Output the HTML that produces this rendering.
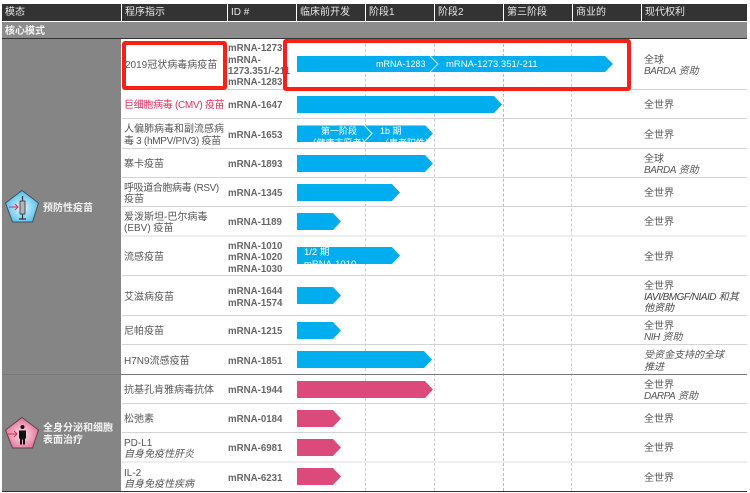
<!DOCTYPE html>
<html lang="zh"><head><meta charset="utf-8"><style>
html,body{margin:0;padding:0;background:#fff}
body{width:750px;height:493px;position:relative;overflow:hidden;font:10px/11.3px "Liberation Sans","Noto Sans CJK SC",sans-serif;color:#555}
#w{position:absolute;left:0;top:0;width:750px;height:493px;filter:blur(.3px)}
.h{position:absolute;top:4px;height:17px;background:#333;color:#e8e8e8;line-height:18.500px;padding-left:3px;box-sizing:border-box;white-space:nowrap}
.d{position:absolute;top:39px;height:452px;width:0;border-left:1px dashed #ccc}
.l{position:absolute;left:122px;width:625px;height:1px;background:#d4d4d4}
.r{position:absolute;left:0;width:750px;transform:translateY(2px)}
.r>div{position:absolute;top:0;bottom:0;display:flex;align-items:center}
.a{left:124px;width:102px}.b{left:228px;width:68px;font-weight:bold;color:#666;font-size:9.700px}.c{left:644px;width:103px;white-space:nowrap}
i{font-style:italic}
.t{letter-spacing:-.5px}
.bar{position:absolute;left:297px;height:17px;background:#00aeef;clip-path:polygon(0 0,calc(100% - 8px) 0,100% 50%,calc(100% - 8px) 100%,0 100%);overflow:hidden;color:#fff;font-size:9px}
.p{background:#db4a7a}
.bar span{position:absolute;white-space:nowrap}
.n{position:absolute;color:#f2f2f2;font-weight:bold;line-height:11.500px}
.box{position:absolute;border:4px solid #fb1f1a;border-radius:3px;box-sizing:border-box}
</style></head><body><div id="w">
<div class="h" style="left:2px;width:119px">模态</div>
<div class="h" style="left:122px;width:105px">程序指示</div>
<div class="h" style="left:228px;width:68px">ID #</div>
<div class="h" style="left:297px;width:68px">临床前开发</div>
<div class="h" style="left:366px;width:68px">阶段1</div>
<div class="h" style="left:435px;width:68px">阶段2</div>
<div class="h" style="left:504px;width:68px">第三阶段</div>
<div class="h" style="left:573px;width:68px">商业的</div>
<div class="h" style="left:642px;width:105px">现代权利</div>
<div style="position:absolute;left:2px;top:22px;width:745px;height:16px;background:#8c8c8c;color:#f2f2f2;font-weight:bold;line-height:19px;padding-left:3px;box-sizing:border-box">核心模式</div>
<div style="position:absolute;left:2px;top:38px;width:745px;height:1px;background:#333"></div>
<div style="position:absolute;left:2px;top:39px;width:119px;height:452px;background:#858585"></div>

<div class="d" style="left:365px"></div><div class="d" style="left:434px"></div><div class="d" style="left:503px;border-color:#bbb"></div><div class="d" style="left:571px"></div>

<div class="l" style="top:89px"></div><div class="l" style="top:118px"></div><div class="l" style="top:148px"></div><div class="l" style="top:177px"></div><div class="l" style="top:206px"></div><div class="l" style="top:235px;height:2px;background:#eee"></div><div class="l" style="top:275px"></div><div class="l" style="top:315px"></div><div class="l" style="top:344px"></div><div class="l" style="top:403px"></div><div class="l" style="top:432px"></div><div class="l" style="top:461px;height:2px;background:#eee"></div>
<div style="position:absolute;left:2px;top:374px;width:745px;height:1px;background:#777"></div>
<div style="position:absolute;left:2px;top:491px;width:745px;height:1px;background:#333"></div>

<div class="r" style="top:39px;height:50px"><div class="a" style="left:125px">2019冠状病毒病疫苗</div><div class="b"><span>mRNA-1273<br>mRNA-<br>1273.351/-211<br>mRNA-1283</span></div><div class="c"><span>全球<br><i><span class="t">BARDA</span> 资助</i></span></div></div>
<div class="r" style="top:90px;height:28px"><div class="a" style="color:#e0305c;white-space:nowrap;letter-spacing:-.3px">巨细胞病毒 (CMV) 疫苗</div><div class="b">mRNA-1647</div><div class="c">全世界</div></div>
<div class="r" style="top:119px;height:29px"><div class="a" style="white-space:nowrap"><span>人偏肺病毒和副流感病<br><span style="letter-spacing:-.3px">毒 3 (hMPV/PIV3) 疫苗</span></span></div><div class="b">mRNA-1653</div><div class="c">全世界</div></div>
<div class="r" style="top:149px;height:28px"><div class="a">寨卡疫苗</div><div class="b">mRNA-1893</div><div class="c"><span>全球<br><i><span class="t">BARDA</span> 资助</i></span></div></div>
<div class="r" style="top:178px;height:28px"><div class="a" style="white-space:nowrap"><span><span style="letter-spacing:-.4px">呼吸道合胞病毒 (RSV)</span><br>疫苗</span></div><div class="b">mRNA-1345</div><div class="c">全世界</div></div>
<div class="r" style="top:207px;height:28px"><div class="a"><span>爱泼斯坦-巴尔病毒<br>(EBV) 疫苗</span></div><div class="b">mRNA-1189</div><div class="c">全世界</div></div>
<div class="r" style="top:237px;height:38px"><div class="a">流感疫苗</div><div class="b"><span>mRNA-1010<br>mRNA-1020<br>mRNA-1030</span></div><div class="c">全世界</div></div>
<div class="r" style="top:276px;height:39px"><div class="a">艾滋病疫苗</div><div class="b"><span>mRNA-1644<br>mRNA-1574</span></div><div class="c"><span>全世界<br><i style="color:#444"><span style="letter-spacing:-.5px">IAVI/BMGF/NIAID</span> 和其<br>他资助</i></span></div></div>
<div class="r" style="top:316px;height:28px"><div class="a">尼帕疫苗</div><div class="b">mRNA-1215</div><div class="c"><span>全世界<br><i><span class="t">NIH</span> 资助</i></span></div></div>
<div class="r" style="top:345px;height:29px"><div class="a">H7N9流感疫苗</div><div class="b">mRNA-1851</div><div class="c"><span><i>受资金支持的全球<br>推进</i></span></div></div>
<div class="r" style="top:375px;height:28px"><div class="a" style="white-space:nowrap">抗基孔肯雅病毒抗体</div><div class="b">mRNA-1944</div><div class="c"><span>全世界<br><i><span class="t">DARPA</span> 资助</i></span></div></div>
<div class="r" style="top:404px;height:28px"><div class="a">松弛素</div><div class="b">mRNA-0184</div><div class="c">全世界</div></div>
<div class="r" style="top:433px;height:28px"><div class="a"><span>PD-L1<br><i>自身免疫性肝炎</i></span></div><div class="b">mRNA-6981</div><div class="c">全世界</div></div>
<div class="r" style="top:463px;height:28px"><div class="a"><span>IL-2<br><i>自身免疫性疾病</i></span></div><div class="b">mRNA-6231</div><div class="c">全世界</div></div>

<div class="bar" style="top:56px;width:316px;height:16px"><span style="left:79px;top:3px">mRNA-1283</span><span style="left:149px;top:3px;font-size:9.500px">mRNA-1273.351/-211</span></div>
<div class="bar" style="top:96px;width:205px"></div>
<div class="bar" style="top:125px;width:136px;border-top:1px solid #7ed3f5;box-sizing:border-box"><span style="left:0;width:84px;text-align:center;top:0;line-height:11.500px">第一阶段<br>（健康志愿者）</span><span style="left:83px;top:0;line-height:11.500px">1b 期<br>（患者阳性）</span></div>
<div class="bar" style="top:155px;width:136px"></div>
<div class="bar" style="top:184px;width:103px"></div>
<div class="bar" style="top:213px;width:44px"></div>
<div class="bar" style="top:247px;width:103px"><span style="left:7px;top:0;line-height:12px;font-size:9.500px">1/2 期<br>mRNA-1010</span></div>
<div class="bar" style="top:287px;width:44px"></div>
<div class="bar" style="top:322px;width:44px"></div>
<div class="bar" style="top:351px;width:135px"></div>
<div class="bar p" style="top:381px;width:136px"></div>
<div class="bar p" style="top:410px;width:44px"></div>
<div class="bar p" style="top:439px;width:44px"></div>
<div class="bar p" style="top:468px;width:44px"></div>

<svg style="position:absolute;left:0;top:0" width="750" height="493" fill="none">
<defs>
<radialGradient id="g1" cx=".5" cy=".55" r=".6"><stop offset="0" stop-color="#e4f6fd"/><stop offset="1" stop-color="#3db8ea"/></radialGradient>
<radialGradient id="g2" cx=".5" cy=".55" r=".6"><stop offset="0" stop-color="#fbe3ea"/><stop offset="1" stop-color="#e2608c"/></radialGradient>
</defs>
<path d="M430 56l8 8-8 8" stroke="#cdeefb" stroke-width="1"/>
<path d="M364 125l8 8.500-8 8.500" stroke="#e3f6fd" stroke-width="1"/>
<path d="M22 190.500L38.500 203 32.500 222H12.500L5.500 203Z" fill="url(#g1)" stroke="#44525a"/>
<path d="M22.500 196v5M22.500 214v5M19 219h7" stroke="#333" stroke-width="1.200"/>
<rect x="20" y="201" width="5" height="13" fill="#b5b5b5" stroke="#333" stroke-width=".8"/>
<path d="M9 207h9M15 204l3 3-3 3" stroke="#e2285a" stroke-width="1"/>
<path d="M22 417.500L38.500 430 32.500 448H12.500L5.500 430Z" fill="url(#g2)" stroke="#5a4450"/>
<circle cx="22.500" cy="427" r="2" fill="#111"/>
<path d="M19 430.500h7v8h-1v6h-2v-5h-1v5h-2v-6h-1Z" fill="#111"/>
<path d="M8 434h9M14 431l3 3-3 3" stroke="#e2285a" stroke-width="1"/>
</svg>

<div class="n" style="left:43px;top:203px">预防性疫苗</div>
<div class="n" style="left:43px;top:423px;width:72px">全身分泌和细胞<br>表面治疗</div>

<div class="box" style="left:122px;top:41px;width:105px;height:49px"></div>
<div class="box" style="left:283px;top:39px;width:348px;height:52px"></div>
</div></body></html>
